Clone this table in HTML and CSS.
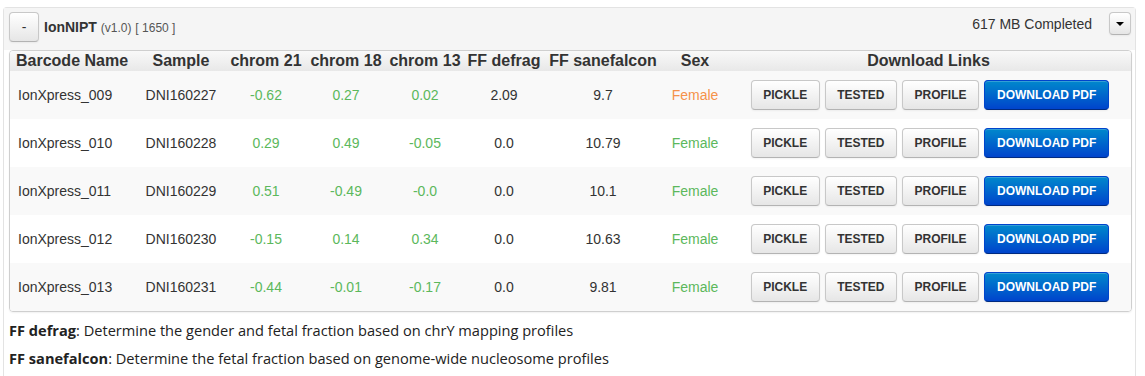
FILE: index.html
```html
<!DOCTYPE html>
<html>
<head>
<meta charset="utf-8">
<link rel="stylesheet" href="styles.css">
</head>
<body>
<div class="panel">
  <div class="panel-head">
    <button class="btn toggle">-</button>
    <div class="title"><b>IonNIPT</b> <span class="meta">(v1.0)</span> <span class="meta">[ 1650 ]</span></div>
    <div class="head-right">
      <span class="status">617 MB Completed</span>
      <button class="btn caret-btn"><span class="caret"></span></button>
    </div>
  </div>
  <div class="panel-body">
    <div class="table-box">
      <table class="grid">
        <colgroup>
          <col class="c-bar"><col class="c-sample"><col class="c-21"><col class="c-18"><col class="c-13"><col class="c-def"><col class="c-sane"><col class="c-sex"><col class="c-dl">
        </colgroup>
        <thead>
          <tr><th class="left">Barcode Name</th><th>Sample</th><th>chrom 21</th><th>chrom 18</th><th>chrom 13</th><th>FF defrag</th><th>FF sanefalcon</th><th>Sex</th><th>Download Links</th></tr>
        </thead>
        <tbody>
          <tr>
            <td class="left">IonXpress_009</td><td>DNI160227</td><td class="ok">-0.62</td><td class="ok">0.27</td><td class="ok">0.02</td><td>2.09</td><td>9.7</td><td class="warn">Female</td>
            <td><div class="links"><button class="btn lb">PICKLE</button><button class="btn lb">TESTED</button><button class="btn lb">PROFILE</button><button class="btn lb primary">DOWNLOAD PDF</button></div></td>
          </tr>
          <tr>
            <td class="left">IonXpress_010</td><td>DNI160228</td><td class="ok">0.29</td><td class="ok">0.49</td><td class="ok">-0.05</td><td>0.0</td><td>10.79</td><td class="ok">Female</td>
            <td><div class="links"><button class="btn lb">PICKLE</button><button class="btn lb">TESTED</button><button class="btn lb">PROFILE</button><button class="btn lb primary">DOWNLOAD PDF</button></div></td>
          </tr>
          <tr>
            <td class="left">IonXpress_011</td><td>DNI160229</td><td class="ok">0.51</td><td class="ok">-0.49</td><td class="ok">-0.0</td><td>0.0</td><td>10.1</td><td class="ok">Female</td>
            <td><div class="links"><button class="btn lb">PICKLE</button><button class="btn lb">TESTED</button><button class="btn lb">PROFILE</button><button class="btn lb primary">DOWNLOAD PDF</button></div></td>
          </tr>
          <tr>
            <td class="left">IonXpress_012</td><td>DNI160230</td><td class="ok">-0.15</td><td class="ok">0.14</td><td class="ok">0.34</td><td>0.0</td><td>10.63</td><td class="ok">Female</td>
            <td><div class="links"><button class="btn lb">PICKLE</button><button class="btn lb">TESTED</button><button class="btn lb">PROFILE</button><button class="btn lb primary">DOWNLOAD PDF</button></div></td>
          </tr>
          <tr>
            <td class="left">IonXpress_013</td><td>DNI160231</td><td class="ok">-0.44</td><td class="ok">-0.01</td><td class="ok">-0.17</td><td>0.0</td><td>9.81</td><td class="ok">Female</td>
            <td><div class="links"><button class="btn lb">PICKLE</button><button class="btn lb">TESTED</button><button class="btn lb">PROFILE</button><button class="btn lb primary">DOWNLOAD PDF</button></div></td>
          </tr>
        </tbody>
      </table>
    </div>
    <p class="note"><b>FF defrag</b>: Determine the gender and fetal fraction based on chrY mapping profiles</p>
    <p class="note"><b>FF sanefalcon</b>: Determine the fetal fraction based on genome-wide nucleosome profiles</p>
  </div>
</div>
</body>
</html>
```

FILE: styles.css
```css
html, body {
  margin: 0;
  padding: 0;
  background: #fff;
}
body {
  font-family: "Liberation Sans", Arial, sans-serif;
  color: #333;
  font-size: 14px;
}
.panel {
  margin: 7px 0 0 3px;
  width: 1133px;
  border: 1px solid #e3e3e3;
  border-bottom: none;
  border-radius: 4px 4px 0 0;
  height: 369px;
  box-sizing: border-box;
}
.panel-head {
  display: flex;
  align-items: flex-start;
  padding: 4px 4px 8px 5px;
  background: #f5f5f5;
}
.btn {
  font-family: "Liberation Sans", Arial, sans-serif;
  color: #333;
  background: linear-gradient(#ffffff, #e6e6e6);
  border: 1px solid #c8c8c8;
  border-bottom-color: #b3b3b3;
  border-radius: 4px;
  box-shadow: inset 0 1px 0 rgba(255,255,255,0.2), 0 1px 2px rgba(0,0,0,0.05);
  padding: 0;
  margin: 0;
  cursor: pointer;
}
.toggle {
  width: 30px;
  height: 30px;
  font-size: 14px;
  line-height: 28px;
}
.title {
  margin-left: 5px;
  height: 30px;
  line-height: 30px;
  font-size: 14px;
}
.title b {
  font-weight: bold;
  color: #333;
}
.meta {
  font-size: 12px;
  color: #555;
}
.head-right {
  margin-left: auto;
  display: flex;
  align-items: center;
  height: 23px;
}
.status {
  font-size: 14px;
  color: #333;
  margin-right: 17px;
}
.caret-btn {
  width: 22px;
  height: 23px;
  display: flex;
  align-items: center;
  justify-content: center;
}
.caret {
  width: 0;
  height: 0;
  border-left: 4px solid transparent;
  border-right: 4px solid transparent;
  border-top: 4px solid #000;
}
.panel-body {
  padding: 0 3px 0 5px;
  background: #fff;
}
.table-box {
  border: 1px solid #cfcfcf;
  border-radius: 4px;
  overflow: hidden;
  box-shadow: 0 1px 2px rgba(0,0,0,0.06);
}
.grid {
  width: 100%;
  border-collapse: collapse;
  table-layout: fixed;
}
.c-bar { width: 128px; }
.c-sample { width: 86px; }
.c-21 { width: 84px; }
.c-18 { width: 76px; }
.c-13 { width: 82px; }
.c-def { width: 76px; }
.c-sane { width: 122px; }
.c-sex { width: 62px; }
.grid th {
  height: 20px;
  padding: 0;
  font-size: 16px;
  font-weight: bold;
  line-height: 20px;
  text-align: center;
  white-space: nowrap;
  color: #333;
  background: linear-gradient(#f9f9f9, #e8e8e8);
}
.grid th.left {
  text-align: left;
  padding-left: 6px;
}
.grid td {
  height: 48px;
  padding: 0;
  text-align: center;
  white-space: nowrap;
  font-size: 14px;
  color: #333;
}
.grid td.left {
  text-align: left;
  padding-left: 8px;
}
.grid tbody tr:nth-child(odd) td {
  background: #f9f9f9;
}
.grid tbody tr:nth-child(even) td {
  background: #fff;
}
.grid td.ok { color: #5cb85c; }
.grid td.warn { color: #f5924a; }
.links {
  display: flex;
  justify-content: center;
  gap: 5px;
  padding-left: 3px;
}
.lb {
  height: 30px;
  padding: 0 11.5px;
  font-size: 12px;
  font-weight: bold;
  line-height: 28px;
}
.lb.primary {
  color: #fff;
  background: linear-gradient(#0088cc, #0044cc);
  border-color: #0044cc #0044cc #002a80;
  padding: 0 12px;
}
.note {
  margin: 8px 0 0 0;
  font-family: "Open Sans", "Noto Sans", sans-serif;
  font-size: 14.6px;
  line-height: 20px;
  color: #222;
}
.note b {
  font-weight: bold;
}
```
